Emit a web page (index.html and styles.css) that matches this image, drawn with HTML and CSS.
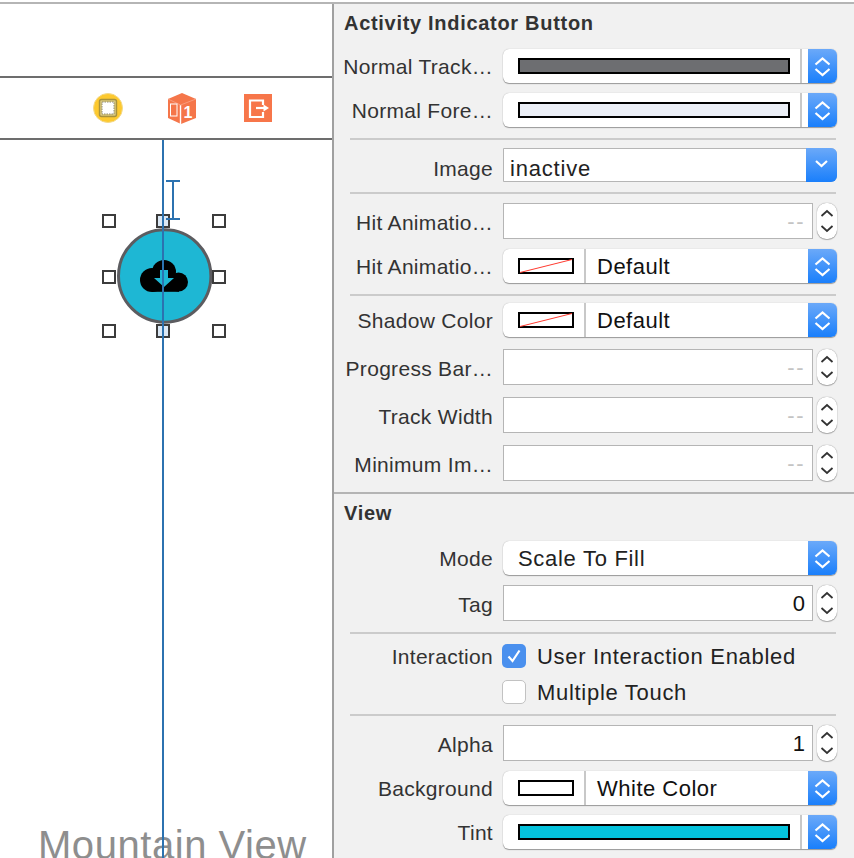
FILE: index.html
```html
<!DOCTYPE html>
<html lang="en">
<head>
    <meta charset="UTF-8">
    <meta name="viewport" content="width=device-width, initial-scale=1.0">
    <title>Attributes Inspector</title>
    <link rel="stylesheet" href="styles.css">
</head>
<body>
    <svg class="defs" width="0" height="0">
        <symbol id="updown" viewBox="0 0 29 34">
            <path d="M7.5 15.5 L14.5 9.5 L21.5 15.5 M7.5 20 L14.5 26 L21.5 20" fill="none" stroke="#fff" stroke-width="2.2"/>
        </symbol>
        <symbol id="down" viewBox="0 0 31 34">
            <path d="M10 13 L15.5 18 L21 13" fill="none" stroke="#fff" stroke-width="2.2"/>
        </symbol>
        <symbol id="step" viewBox="0 0 20 36">
            <path d="M4.5 13 L10 8 L15.5 13 M4.5 23 L10 28 L15.5 23" fill="none" stroke="#333" stroke-width="1.8"/>
        </symbol>
        <symbol id="nocolor" viewBox="0 0 56 16">
            <rect x="1" y="1" width="54" height="14" fill="#fff" stroke="#000" stroke-width="2"/>
            <path d="M2 14.5 L54 1.5" stroke="#ff3b30" stroke-width="1"/>
        </symbol>
    </svg>

    <div class="app">
        <div class="canvas">
            <div class="scene-top"></div>
            <div class="scene-bar">
                <svg class="bar-icon" width="30" height="30" viewBox="0 0 30 30">
                    <circle cx="15" cy="15" r="14.5" fill="#fdc92f" stroke="#f3d98a"/>
                    <rect x="6.5" y="6.5" width="17" height="17" rx="2" fill="#d9c77e" stroke="#a8923c" stroke-width="1.4"/>
                    <rect x="9" y="9" width="12" height="12" fill="#fff" stroke="#8f8a70" stroke-dasharray="1.5 1"/>
                </svg>
                <svg class="bar-icon" width="28" height="31" viewBox="0 0 28 31">
                    <path d="M14 0 L28 6 L28 25 L13 31 L0 25 L0 6 Z" fill="#f5764a"/>
                    <path d="M12.500 12 L12.500 31" fill="none" stroke="#fff" stroke-width="1.4"/>
                    <path d="M0 6 L12.500 12 L28 6" fill="none" stroke="#f9a588" stroke-width="0.8"/>
                    <rect x="2.500" y="11" width="6.500" height="12" fill="none" stroke="#fff"/>
                    <text x="15.500" y="25" class="cube-num">1</text>
                </svg>
                <svg class="bar-icon" width="28" height="28" viewBox="0 0 28 28">
                    <rect width="28" height="28" fill="#f7764a"/>
                    <path d="M19 11 V6.5 H6 V23 H19 V18" fill="none" stroke="#fff" stroke-width="2.2"/>
                    <path d="M12 14 H20" stroke="#fff" stroke-width="2.2"/>
                    <path d="M19.500 10.500 L25 14 L19.500 17.500 Z" fill="#fff"/>
                </svg>
            </div>
            <div class="stage">
                <svg class="indicator" width="98" height="98" viewBox="0 0 98 98">
                    <circle cx="48.700" cy="49" r="46.200" fill="#1eb7d4" stroke="#5c5c60" stroke-width="3"/>
                    <g fill="#000">
                        <circle cx="36" cy="53" r="12"/>
                        <circle cx="48" cy="45" r="12"/>
                        <circle cx="62.500" cy="55" r="9.500"/>
                        <rect x="36" y="50" width="27" height="14.800"/>
                    </g>
                    <path d="M44 43 H52 V51 H58 L48 60 L38 51 H44 Z" fill="#1eb7d4"/>
                </svg>
                <div class="handle handle-a"></div>
                <div class="handle handle-b handle-soft"></div>
                <div class="handle handle-c"></div>
                <div class="handle handle-d"></div>
                <div class="handle handle-e"></div>
                <div class="handle handle-f"></div>
                <div class="handle handle-g handle-soft"></div>
                <div class="handle handle-h"></div>
                <div class="guide"></div>
                <div class="beam"></div>
                <div class="place-name">Mountain View</div>
            </div>
        </div>

        <div class="inspector">
            <div class="section">
                <h3 class="section-title">Activity Indicator Button</h3>
                <div class="row row-first">
                    <label class="label">Normal Track…</label>
                    <div class="popup">
                        <span class="swatch swatch-wide swatch-gray"></span>
                        <span class="well-sep"></span>
                        <svg class="cap"><use href="#updown"/></svg>
                    </div>
                </div>
                <div class="row">
                    <label class="label">Normal Fore…</label>
                    <div class="popup">
                        <span class="swatch swatch-wide swatch-pale"></span>
                        <span class="well-sep"></span>
                        <svg class="cap"><use href="#updown"/></svg>
                    </div>
                </div>
                <div class="divider"></div>
                <div class="row mt-8">
                    <label class="label label-low">Image</label>
                    <div class="combo">
                        <span class="combo-text">inactive</span>
                        <svg class="cap cap-combo"><use href="#down"/></svg>
                    </div>
                </div>
                <div class="divider mt-10"></div>
                <div class="row row-field mt-9">
                    <label class="label">Hit Animatio…</label>
                    <div class="field field-empty">--</div>
                    <svg class="stepper"><use href="#step"/></svg>
                </div>
                <div class="row">
                    <label class="label">Hit Animatio…</label>
                    <div class="popup">
                        <svg class="swatch-svg"><use href="#nocolor"/></svg>
                        <span class="swatch-sep"></span>
                        <span class="popup-text">Default</span>
                        <svg class="cap"><use href="#updown"/></svg>
                    </div>
                </div>
                <div class="divider"></div>
                <div class="row mt-7">
                    <label class="label">Shadow Color</label>
                    <div class="popup">
                        <svg class="swatch-svg"><use href="#nocolor"/></svg>
                        <span class="swatch-sep"></span>
                        <span class="popup-text">Default</span>
                        <svg class="cap"><use href="#updown"/></svg>
                    </div>
                </div>
                <div class="row row-field mt-12">
                    <label class="label">Progress Bar…</label>
                    <div class="field field-empty">--</div>
                    <svg class="stepper"><use href="#step"/></svg>
                </div>
                <div class="row row-field mt-12">
                    <label class="label">Track Width</label>
                    <div class="field field-empty">--</div>
                    <svg class="stepper"><use href="#step"/></svg>
                </div>
                <div class="row row-field mt-12">
                    <label class="label">Minimum Im…</label>
                    <div class="field field-empty">--</div>
                    <svg class="stepper"><use href="#step"/></svg>
                </div>
            </div>

            <div class="section section-view">
                <h3 class="section-title">View</h3>
                <div class="row row-mode">
                    <label class="label">Mode</label>
                    <div class="popup">
                        <span class="popup-text popup-text-plain">Scale To Fill</span>
                        <svg class="cap"><use href="#updown"/></svg>
                    </div>
                </div>
                <div class="row row-field">
                    <label class="label">Tag</label>
                    <div class="field">0</div>
                    <svg class="stepper"><use href="#step"/></svg>
                </div>
                <div class="divider"></div>
                <div class="row row-check mt-10">
                    <label class="label">Interaction</label>
                    <span class="check check-on">
                        <svg width="24" height="24" viewBox="0 0 24 24"><path d="M6.500 12.500 L10.500 17 L17.500 6.500" fill="none" stroke="#fff" stroke-width="2.200"/></svg>
                    </span>
                    <span class="check-text">User Interaction Enabled</span>
                </div>
                <div class="row row-check mt-12">
                    <span class="label"></span>
                    <span class="check"></span>
                    <span class="check-text">Multiple Touch</span>
                </div>
                <div class="divider mt-10"></div>
                <div class="row row-field mt-9">
                    <label class="label">Alpha</label>
                    <div class="field">1</div>
                    <svg class="stepper"><use href="#step"/></svg>
                </div>
                <div class="row">
                    <label class="label">Background</label>
                    <div class="popup">
                        <span class="swatch"></span>
                        <span class="swatch-sep"></span>
                        <span class="popup-text">White Color</span>
                        <svg class="cap"><use href="#updown"/></svg>
                    </div>
                </div>
                <div class="row">
                    <label class="label">Tint</label>
                    <div class="popup">
                        <span class="swatch swatch-wide swatch-tint"></span>
                        <span class="well-sep"></span>
                        <svg class="cap"><use href="#updown"/></svg>
                    </div>
                </div>
            </div>
        </div>
    </div>
</body>
</html>
```

FILE: styles.css
```css
html, body {
    margin: 0;
    height: 858px;
    overflow: hidden;
    background-color: #ffffff;
}
body {
    padding-top: 2px;
    box-sizing: border-box;
    font-family: "Liberation Sans", Arial, sans-serif;
}
.defs {
    display: block;
    height: 0;
}
.app {
    display: flex;
    height: 856px;
    border-top: 2px solid #b5b5b5;
    box-sizing: border-box;
}

/* left side, the storyboard */
.canvas {
    width: 334px;
    flex-shrink: 0;
    box-sizing: border-box;
    border-right: 2px solid #a0a0a0;
    display: flex;
    flex-direction: column;
}
.scene-top {
    height: 72px;
    border-bottom: 2px solid #6d6d6d;
}
.scene-bar {
    height: 60px;
    border-bottom: 2px solid #6d6d6d;
    display: flex;
    align-items: center;
    padding-left: 93px;
}
.bar-icon {
    margin-right: 45px;
    flex-shrink: 0;
}
.bar-icon:nth-child(2) {
    margin-right: 48px;
}
.cube-num {
    font-size: 16px;
    font-weight: bold;
    fill: #ffffff;
}
.stage {
    flex: 1;
    position: relative;
    overflow: hidden;
}
.indicator {
    position: absolute;
    left: 116px;
    top: 87px;
}
.handle {
    position: absolute;
    width: 14px;
    height: 14px;
    box-sizing: border-box;
    border: 2px solid #3c3c3c;
    background-color: #ffffff;
}
.handle-soft {
    background-color: #dbe8f5;
}
.handle-a { left: 102px; top: 74px; }
.handle-b { left: 156px; top: 74px; }
.handle-c { left: 212px; top: 74px; }
.handle-d { left: 102px; top: 130px; }
.handle-e { left: 212px; top: 130px; }
.handle-f { left: 102px; top: 184px; }
.handle-g { left: 156px; top: 184px; }
.handle-h { left: 212px; top: 184px; }
.guide {
    position: absolute;
    left: 162px;
    top: 0;
    bottom: 0;
    width: 2px;
    background-color: #2c72b0;
    z-index: 2;
}
.beam {
    position: absolute;
    left: 166px;
    top: 40px;
    width: 14px;
    height: 40px;
    box-sizing: border-box;
    border-top: 2px solid #2c72b0;
    border-bottom: 2px solid #2c72b0;
    background: linear-gradient(#2c72b0, #2c72b0) center / 2px 100% no-repeat;
}
.place-name {
    position: absolute;
    left: 38px;
    bottom: -10px;
    font-size: 40px;
    letter-spacing: 0.55px;
    line-height: 46px;
    color: #8e8e8e;
    white-space: nowrap;
}

/* right side, the inspector */
.inspector {
    flex: 1;
    background-color: #f1f1f1;
    min-width: 0;
}
.section {
    height: 490px;
    box-sizing: border-box;
    border-bottom: 2px solid #b4b4b4;
}
.section-view {
    height: auto;
    border-bottom: none;
}
.section-title {
    margin: 0;
    padding-left: 10px;
    height: 38px;
    line-height: 38px;
    font-size: 20px;
    letter-spacing: 0.7px;
    font-weight: bold;
    color: #333333;
}
.section-view .section-title {
    line-height: 38px;
}
.row {
    display: flex;
    align-items: stretch;
    height: 34px;
    margin-top: 10px;
}
.row-first {
    margin-top: 7px;
}
.row-mode {
    margin-top: 9px;
}
.row-field {
    height: 36px;
}
.row-check {
    height: 24px;
    align-items: center;
}
.mt-7 { margin-top: 7px; }
.mt-8 { margin-top: 8px; }
.mt-9 { margin-top: 9px; }
.mt-10 { margin-top: 10px; }
.mt-12 { margin-top: 12px; }
.label {
    width: 159px;
    flex-shrink: 0;
    margin-right: 10px;
    padding-top: 2px;
    text-align: right;
    align-self: center;
    font-size: 21px;
    letter-spacing: 0.3px;
    color: #333333;
    white-space: nowrap;
}
.row-field .label {
    padding-top: 3px;
}
.row-check .label {
    padding-top: 1px;
}
.label-low {
    padding-top: 7px;
}
.divider {
    height: 2px;
    margin: 11px 18px 0 16px;
    background-color: #cbcbcb;
}
.divider.mt-10 {
    margin-top: 10px;
}
.popup {
    width: 334px;
    box-sizing: border-box;
    position: relative;
    display: flex;
    align-items: center;
    background-color: #ffffff;
    border-radius: 6px;
    box-shadow: 0 1px 1px rgba(0, 0, 0, 0.35), 0 0 1px rgba(0, 0, 0, 0.3);
    padding-left: 15px;
}
.cap {
    position: absolute;
    right: 0;
    top: 0;
    width: 29px;
    height: 100%;
    border-radius: 0 6px 6px 0;
    background: linear-gradient(#6ba9f9, #1a7ffb);
}
.swatch {
    width: 56px;
    height: 16px;
    box-sizing: border-box;
    border: 2px solid #000000;
    background-color: #ffffff;
    flex-shrink: 0;
}
.swatch-svg {
    width: 56px;
    height: 16px;
    flex-shrink: 0;
}
.swatch-wide {
    width: 272px;
}
.swatch-gray { background-color: #6d6e71; }
.swatch-pale { background-color: #ebeef6; }
.swatch-tint { background-color: #04c2dc; }
.well-sep {
    width: 2px;
    height: 100%;
    margin-left: 10px;
    background-color: #c8c8c8;
}
.swatch-sep {
    width: 2px;
    height: 100%;
    margin-left: 10px;
    margin-right: 11px;
    background-color: #c8c8c8;
}
.popup-text {
    padding-top: 1px;
    font-size: 22px;
    letter-spacing: 0.5px;
    color: #111111;
}
.popup-text-plain {
    letter-spacing: 0.7px;
    color: #222222;
}
.combo {
    width: 334px;
    box-sizing: border-box;
    position: relative;
    display: flex;
    align-items: center;
    background-color: #ffffff;
    border: 1px solid #b5b5b5;
    border-radius: 0 6px 6px 0;
    padding-left: 6px;
}
.cap-combo {
    width: 31px;
    right: -1px;
    top: -1px;
    height: calc(100% + 2px);
}
.combo-text {
    padding-top: 7px;
    font-size: 22px;
    letter-spacing: 0.8px;
    color: #222222;
}
.field {
    width: 310px;
    box-sizing: border-box;
    background-color: #ffffff;
    border: 1px solid #b5b5b5;
    padding-right: 7px;
    text-align: right;
    font-size: 22px;
    line-height: 36px;
    color: #111111;
}
.field-empty {
    color: #c4c4c4;
    letter-spacing: 1.5px;
}
.stepper {
    width: 20px;
    height: 36px;
    margin-left: 4px;
    background-color: #ffffff;
    border-radius: 9px;
    box-shadow: 0 0 1px rgba(0, 0, 0, 0.5), 0 1px 1px rgba(0, 0, 0, 0.25);
}
.check {
    width: 24px;
    height: 24px;
    margin-left: -1px;
    box-sizing: border-box;
    flex-shrink: 0;
    border-radius: 5px;
    background-color: #ffffff;
    border: 1px solid #c2c2c2;
}
.check-on {
    border: none;
    background-color: #4a90ee;
}
.check-text {
    margin-left: 11px;
    padding-top: 1px;
    font-size: 22px;
    letter-spacing: 0.7px;
    color: #222222;
    white-space: nowrap;
}
```
